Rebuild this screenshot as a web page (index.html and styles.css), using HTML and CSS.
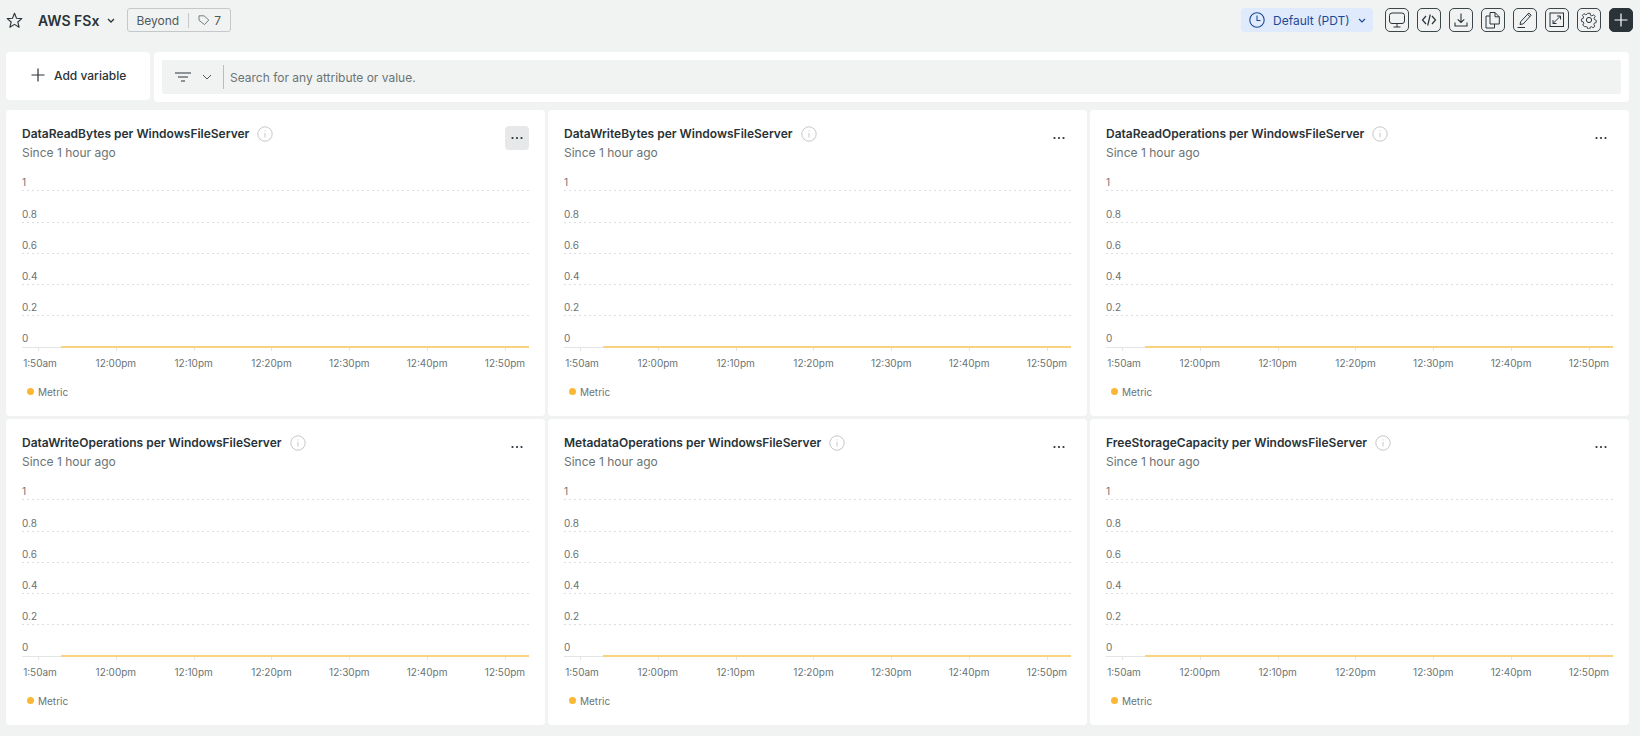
FILE: index.html
```html
<!DOCTYPE html>
<html>
<head>
    <meta charset="utf-8">
    <title>AWS FSx</title>
    <link rel="stylesheet" href="styles.css">
</head>
<body>

<svg class="defs" width="0" height="0">
    <symbol id="i-info" viewBox="0 0 16 16"><circle cx="8" cy="8" r="7.2" fill="none" stroke="#c4c8c9"/><path d="M8 7v4.5M8 4.4v1" fill="none" stroke="#c4c8c9"/></symbol>
    <symbol id="i-dots" viewBox="0 0 24 24"><circle cx="7.5" cy="12" r="1.1" fill="#293338"/><circle cx="12" cy="12" r="1.1" fill="#293338"/><circle cx="16.5" cy="12" r="1.1" fill="#293338"/></symbol>
</svg>

<header class="topbar">
    <div class="title-group">
        <svg class="star" width="17" height="17" viewBox="0 0 17 17"><path d="M8.5 1.3l2 4.9 5.3.4-4 3.4 1.3 5.2-4.6-2.8-4.6 2.8 1.3-5.2-4-3.4 5.3-.4z" fill="none" stroke="#293338" stroke-width="1.1" stroke-linejoin="round"/></svg>
        <h1 class="page-name">AWS FSx</h1>
        <svg class="caret" width="8" height="5" viewBox="0 0 8 5"><path d="M1 1l3 3 3-3" fill="none" stroke="#293338" stroke-width="1.3"/></svg>
        <div class="tag-box">
            <span>Beyond</span>
            <span class="tag-sep"></span>
            <svg width="12" height="12" viewBox="0 0 12 12"><path d="M1 1.8h5l4.8 4.2-4.3 4.6L1 6.300z" fill="none" stroke="#6b7374" stroke-width=".9" stroke-linejoin="round"/></svg>
            <span>7</span>
        </div>
    </div>
    <div class="actions">
        <button class="time-pill">
            <svg width="16" height="16" viewBox="0 0 16 16"><circle cx="8" cy="8" r="7.200" fill="none" stroke="#1d4a94" stroke-width="1.100"/><path d="M8 3.500V8.500h3.500" fill="none" stroke="#1d4a94" stroke-width="1.100"/></svg>
            <span>Default (PDT)</span>
            <svg width="8" height="5" viewBox="0 0 8 5"><path d="M1 1l3 3 3-3" fill="none" stroke="#1d4a94" stroke-width="1.200"/></svg>
        </button>
        <button class="icon-btn"><svg width="18" height="18" viewBox="0 0 18 18" fill="none" stroke="#293338"><rect x="1.500" y="2" width="15" height="10.500" rx="2.500"/><path d="M9 12.500v3.500M5.500 16h7"/></svg></button>
        <button class="icon-btn"><svg width="16" height="16" viewBox="0 0 16 16" fill="none" stroke="#293338" stroke-width="1.200"><path d="M5 4L1.500 8 5 12M11 4l3.500 4L11 12M9.300 2.500L6.700 13.500"/></svg></button>
        <button class="icon-btn"><svg width="16" height="16" viewBox="0 0 16 16" fill="none" stroke="#293338" stroke-width="1.100"><path d="M8 1.500v8.800M4.700 7.300L8 10.500l3.300-3.200M2 10.500v3.500h12v-3.500"/></svg></button>
        <button class="icon-btn"><svg width="18" height="18" viewBox="0 0 18 18" fill="none" stroke="#293338" stroke-width="1"><path d="M6 13V1.500h5l4.300 4.300V13zM11 1.500v4.300h4.300M6 5H2v12h8.500v-4"/></svg></button>
        <button class="icon-btn"><svg width="18" height="18" viewBox="0 0 18 18" fill="none" stroke="#293338" stroke-width="1"><path d="M4 13.500l.8-3L12.800 2l2.400 2.200-8 8.700zM11.500 3.300l2.400 2.300M1.500 16.500H9"/></svg></button>
        <button class="icon-btn"><svg width="18" height="18" viewBox="0 0 18 18" fill="none" stroke="#293338" stroke-width="1"><rect x="2" y="2" width="13.500" height="13.500"/><path d="M5 12.500L12.500 5M9 5h3.500v3.500M5 9v3.500h3.500"/></svg></button>
        <button class="icon-btn"><svg width="18" height="18" viewBox="0 0 18 18" fill="none" stroke="#293338" stroke-width="1"><circle cx="9" cy="9" r="2.600"/><path d="M7.700 1.500h2.600l.4 2.200 1.500.7 2-1.200 1.700 2-1.300 1.800.4 1.500 2 .8v2.500l-2 .6-.6 1.600 1.100 1.900-1.900 1.700-1.800-1.200-1.500.6-.4 2.100H7.700l-.4-2.100-1.500-.6L4 16.300l-1.900-1.700 1.100-1.900-.6-1.600-2-.6V8l2-.8.400-1.500L1.700 3.900l1.700-2 2 1.200 1.500-.7z" transform="translate(.9 .9) scale(.9)"/></svg></button>
        <button class="icon-btn add-btn"><svg width="16" height="16" viewBox="0 0 16 16" fill="none" stroke="#fff" stroke-width="1.200"><path d="M8 1.500v13M1.500 8h13"/></svg></button>
    </div>
</header>

<section class="variables">
    <button class="add-variable">
        <svg width="14" height="14" viewBox="0 0 14 14" fill="none" stroke="#293338" stroke-width="1.200"><path d="M7 .5v13M.5 7h13"/></svg>
        <span>Add variable</span>
    </button>
    <div class="search-card">
        <div class="search-inner">
            <div class="filter-type">
                <svg width="16" height="10" viewBox="0 0 16 10" fill="none" stroke="#293338" stroke-width="1"><path d="M0 1h16M3 5h10M6 9h4"/></svg>
                <svg width="10" height="6" viewBox="0 0 10 6" fill="none" stroke="#50595b" stroke-width="1"><path d="M1 1l4 4 4-4"/></svg>
            </div>
            <span class="search-text">Search for any attribute or value.</span>
        </div>
    </div>
</section>

<main class="grid">

    <article class="card">
        <div class="card-head">
            <div>
                <div class="card-title">DataReadBytes per WindowsFileServer <svg class="info" width="16" height="16"><use href="#i-info"/></svg></div>
                <div class="card-sub">Since 1 hour ago</div>
            </div>
            <button class="more more-hover"><svg width="24" height="24"><use href="#i-dots"/></svg></button>
        </div>
        <div class="chart">
            <div class="row"><span>1</span></div>
            <div class="row"><span>0.8</span></div>
            <div class="row"><span>0.6</span></div>
            <div class="row"><span>0.4</span></div>
            <div class="row"><span>0.2</span></div>
            <div class="row row-zero"><span>0</span><i class="series"></i></div>
            <div class="xaxis">
                <div class="tick"><span>1:50am</span></div>
                <div class="tick"><span>12:00pm</span></div>
                <div class="tick"><span>12:10pm</span></div>
                <div class="tick"><span>12:20pm</span></div>
                <div class="tick"><span>12:30pm</span></div>
                <div class="tick"><span>12:40pm</span></div>
                <div class="tick"><span>12:50pm</span></div>
            </div>
        </div>
        <div class="legend"><i class="dot"></i>Metric</div>
    </article>

    <article class="card">
        <div class="card-head">
            <div>
                <div class="card-title">DataWriteBytes per WindowsFileServer <svg class="info" width="16" height="16"><use href="#i-info"/></svg></div>
                <div class="card-sub">Since 1 hour ago</div>
            </div>
            <button class="more"><svg width="24" height="24"><use href="#i-dots"/></svg></button>
        </div>
        <div class="chart">
            <div class="row"><span>1</span></div>
            <div class="row"><span>0.8</span></div>
            <div class="row"><span>0.6</span></div>
            <div class="row"><span>0.4</span></div>
            <div class="row"><span>0.2</span></div>
            <div class="row row-zero"><span>0</span><i class="series"></i></div>
            <div class="xaxis">
                <div class="tick"><span>1:50am</span></div>
                <div class="tick"><span>12:00pm</span></div>
                <div class="tick"><span>12:10pm</span></div>
                <div class="tick"><span>12:20pm</span></div>
                <div class="tick"><span>12:30pm</span></div>
                <div class="tick"><span>12:40pm</span></div>
                <div class="tick"><span>12:50pm</span></div>
            </div>
        </div>
        <div class="legend"><i class="dot"></i>Metric</div>
    </article>

    <article class="card">
        <div class="card-head">
            <div>
                <div class="card-title">DataReadOperations per WindowsFileServer <svg class="info" width="16" height="16"><use href="#i-info"/></svg></div>
                <div class="card-sub">Since 1 hour ago</div>
            </div>
            <button class="more"><svg width="24" height="24"><use href="#i-dots"/></svg></button>
        </div>
        <div class="chart">
            <div class="row"><span>1</span></div>
            <div class="row"><span>0.8</span></div>
            <div class="row"><span>0.6</span></div>
            <div class="row"><span>0.4</span></div>
            <div class="row"><span>0.2</span></div>
            <div class="row row-zero"><span>0</span><i class="series"></i></div>
            <div class="xaxis">
                <div class="tick"><span>1:50am</span></div>
                <div class="tick"><span>12:00pm</span></div>
                <div class="tick"><span>12:10pm</span></div>
                <div class="tick"><span>12:20pm</span></div>
                <div class="tick"><span>12:30pm</span></div>
                <div class="tick"><span>12:40pm</span></div>
                <div class="tick"><span>12:50pm</span></div>
            </div>
        </div>
        <div class="legend"><i class="dot"></i>Metric</div>
    </article>

    <article class="card">
        <div class="card-head">
            <div>
                <div class="card-title">DataWriteOperations per WindowsFileServer <svg class="info" width="16" height="16"><use href="#i-info"/></svg></div>
                <div class="card-sub">Since 1 hour ago</div>
            </div>
            <button class="more"><svg width="24" height="24"><use href="#i-dots"/></svg></button>
        </div>
        <div class="chart">
            <div class="row"><span>1</span></div>
            <div class="row"><span>0.8</span></div>
            <div class="row"><span>0.6</span></div>
            <div class="row"><span>0.4</span></div>
            <div class="row"><span>0.2</span></div>
            <div class="row row-zero"><span>0</span><i class="series"></i></div>
            <div class="xaxis">
                <div class="tick"><span>1:50am</span></div>
                <div class="tick"><span>12:00pm</span></div>
                <div class="tick"><span>12:10pm</span></div>
                <div class="tick"><span>12:20pm</span></div>
                <div class="tick"><span>12:30pm</span></div>
                <div class="tick"><span>12:40pm</span></div>
                <div class="tick"><span>12:50pm</span></div>
            </div>
        </div>
        <div class="legend"><i class="dot"></i>Metric</div>
    </article>

    <article class="card">
        <div class="card-head">
            <div>
                <div class="card-title">MetadataOperations per WindowsFileServer <svg class="info" width="16" height="16"><use href="#i-info"/></svg></div>
                <div class="card-sub">Since 1 hour ago</div>
            </div>
            <button class="more"><svg width="24" height="24"><use href="#i-dots"/></svg></button>
        </div>
        <div class="chart">
            <div class="row"><span>1</span></div>
            <div class="row"><span>0.8</span></div>
            <div class="row"><span>0.6</span></div>
            <div class="row"><span>0.4</span></div>
            <div class="row"><span>0.2</span></div>
            <div class="row row-zero"><span>0</span><i class="series"></i></div>
            <div class="xaxis">
                <div class="tick"><span>1:50am</span></div>
                <div class="tick"><span>12:00pm</span></div>
                <div class="tick"><span>12:10pm</span></div>
                <div class="tick"><span>12:20pm</span></div>
                <div class="tick"><span>12:30pm</span></div>
                <div class="tick"><span>12:40pm</span></div>
                <div class="tick"><span>12:50pm</span></div>
            </div>
        </div>
        <div class="legend"><i class="dot"></i>Metric</div>
    </article>

    <article class="card">
        <div class="card-head">
            <div>
                <div class="card-title">FreeStorageCapacity per WindowsFileServer <svg class="info" width="16" height="16"><use href="#i-info"/></svg></div>
                <div class="card-sub">Since 1 hour ago</div>
            </div>
            <button class="more"><svg width="24" height="24"><use href="#i-dots"/></svg></button>
        </div>
        <div class="chart">
            <div class="row"><span>1</span></div>
            <div class="row"><span>0.8</span></div>
            <div class="row"><span>0.6</span></div>
            <div class="row"><span>0.4</span></div>
            <div class="row"><span>0.2</span></div>
            <div class="row row-zero"><span>0</span><i class="series"></i></div>
            <div class="xaxis">
                <div class="tick"><span>1:50am</span></div>
                <div class="tick"><span>12:00pm</span></div>
                <div class="tick"><span>12:10pm</span></div>
                <div class="tick"><span>12:20pm</span></div>
                <div class="tick"><span>12:30pm</span></div>
                <div class="tick"><span>12:40pm</span></div>
                <div class="tick"><span>12:50pm</span></div>
            </div>
        </div>
        <div class="legend"><i class="dot"></i>Metric</div>
    </article>

</main>

</body>
</html>
```

FILE: styles.css
```css
* {
    box-sizing: border-box;
}
body {
    margin: 0;
    height: 736px;
    overflow: hidden;
    background-color: #f1f3f3;
    font-family: Inter, "Liberation Sans", sans-serif;
    color: #293338;
}
button {
    font-family: inherit;
    cursor: pointer;
}
.defs {
    display: block;
    height: 0;
}

/* top bar */
.topbar {
    height: 52px;
    padding: 8px 7px 0 6px;
    display: flex;
    justify-content: space-between;
    align-items: flex-start;
}
.title-group {
    height: 24px;
    display: flex;
    align-items: center;
}
.page-name {
    margin: 0 8px 0 15px;
    font-size: 14px;
    font-weight: 600;
}
.caret {
    margin-right: 12px;
}
.tag-box {
    height: 24px;
    padding: 0 9px 0 8px;
    display: flex;
    align-items: center;
    gap: 4px;
    border: 1px solid #c4c8c9;
    border-radius: 3px;
    font-size: 12px;
    color: #50595b;
}
.tag-sep {
    width: 1px;
    height: 15px;
    margin: 0 5px;
    background-color: #c4c8c9;
}
.actions {
    display: flex;
    gap: 8px;
}
.time-pill {
    width: 132px;
    height: 24px;
    margin-right: 4px;
    padding: 0 0 0 8px;
    display: flex;
    align-items: center;
    gap: 8px;
    border: 0;
    border-radius: 4px;
    background-color: #dfeafc;
    font-size: 12px;
    color: #1d4a94;
    white-space: nowrap;
}
.icon-btn {
    width: 24px;
    height: 24px;
    padding: 0;
    display: flex;
    align-items: center;
    justify-content: center;
    border: 1px solid #3c4648;
    border-radius: 5px;
    background-color: transparent;
}
.add-btn {
    background-color: #293338;
    border-color: #293338;
}

/* variable bar */
.variables {
    display: flex;
    align-items: flex-start;
    gap: 4px;
    padding: 0 11px 0 6px;
}
.add-variable {
    width: 144px;
    height: 48px;
    padding: 0 0 2px 25px;
    display: flex;
    align-items: center;
    gap: 9px;
    border: 0;
    border-radius: 4px;
    background-color: #fff;
    font-size: 12px;
    font-weight: 500;
    color: #293338;
}
.search-card {
    flex: 1;
    height: 50px;
    padding: 8px;
    border-radius: 4px;
    background-color: #fff;
}
.search-inner {
    height: 34px;
    display: flex;
    align-items: center;
    border-radius: 2px;
    background-color: #f1f3f3;
}
.filter-type {
    width: 62px;
    height: 24px;
    padding-left: 13px;
    display: flex;
    align-items: center;
    gap: 11px;
    border-right: 1px solid #b9bdbd;
}
.search-text {
    margin: 1px 0 0 6px;
    font-size: 12px;
    color: #6b7374;
}

/* cards */
.grid {
    margin-top: 8px;
    padding: 0 11px 0 6px;
    display: grid;
    grid-template-columns: repeat(3, 1fr);
    grid-auto-rows: 306px;
    gap: 3px;
}
.card {
    padding: 16px 16px 0;
    border-radius: 4px;
    background-color: #fff;
}
.card-head {
    height: 34px;
    display: flex;
    justify-content: space-between;
    align-items: flex-start;
}
.card-title {
    display: flex;
    align-items: center;
    gap: 8px;
    height: 14px;
    font-size: 12px;
    font-weight: 600;
    white-space: nowrap;
}
.info {
    margin-top: 2px;
}
.card-sub {
    margin-top: 5px;
    font-size: 12px;
    line-height: 16px;
    color: #6b7374;
}
.more {
    width: 24px;
    height: 24px;
    padding: 0;
    border: 0;
    border-radius: 4px;
    background-color: transparent;
}
.more-hover {
    background-color: #e7e8ea;
}

/* chart */
.row {
    position: relative;
    height: 31.3px;
    padding-bottom: 2px;
    display: flex;
    align-items: flex-end;
    background: linear-gradient(to right, #dcdfdf 2px, transparent 2px) left bottom / 5px 1px repeat-x;
    font-size: 10px;
    line-height: 13px;
    color: #6b7374;
}
.row-zero {
    background: none;
    border-bottom: 1px solid #e3e5e5;
}
.series {
    position: absolute;
    left: 39px;
    right: 0;
    bottom: -1px;
    height: 2px;
    background-color: #f8d27e;
}
.xaxis {
    display: flex;
    justify-content: space-between;
    padding: 0 24px 0 16px;
}
.tick {
    width: 0;
    display: flex;
    justify-content: center;
    position: relative;
    padding-top: 8px;
    font-size: 10px;
    line-height: 14px;
    color: #6b7374;
    white-space: nowrap;
}
.tick:first-child span {
    margin-left: 4px;
}
.tick::before {
    content: "";
    position: absolute;
    top: 0;
    left: 0;
    height: 3px;
    border-left: 1px solid #e3e5e5;
}
.legend {
    margin-top: 15px;
    padding-left: 5px;
    display: flex;
    align-items: center;
    gap: 4px;
    font-size: 10px;
    line-height: 14px;
    color: #6b7374;
}
.dot {
    width: 7px;
    height: 7px;
    border-radius: 50%;
    background-color: #fbb735;
}
```
